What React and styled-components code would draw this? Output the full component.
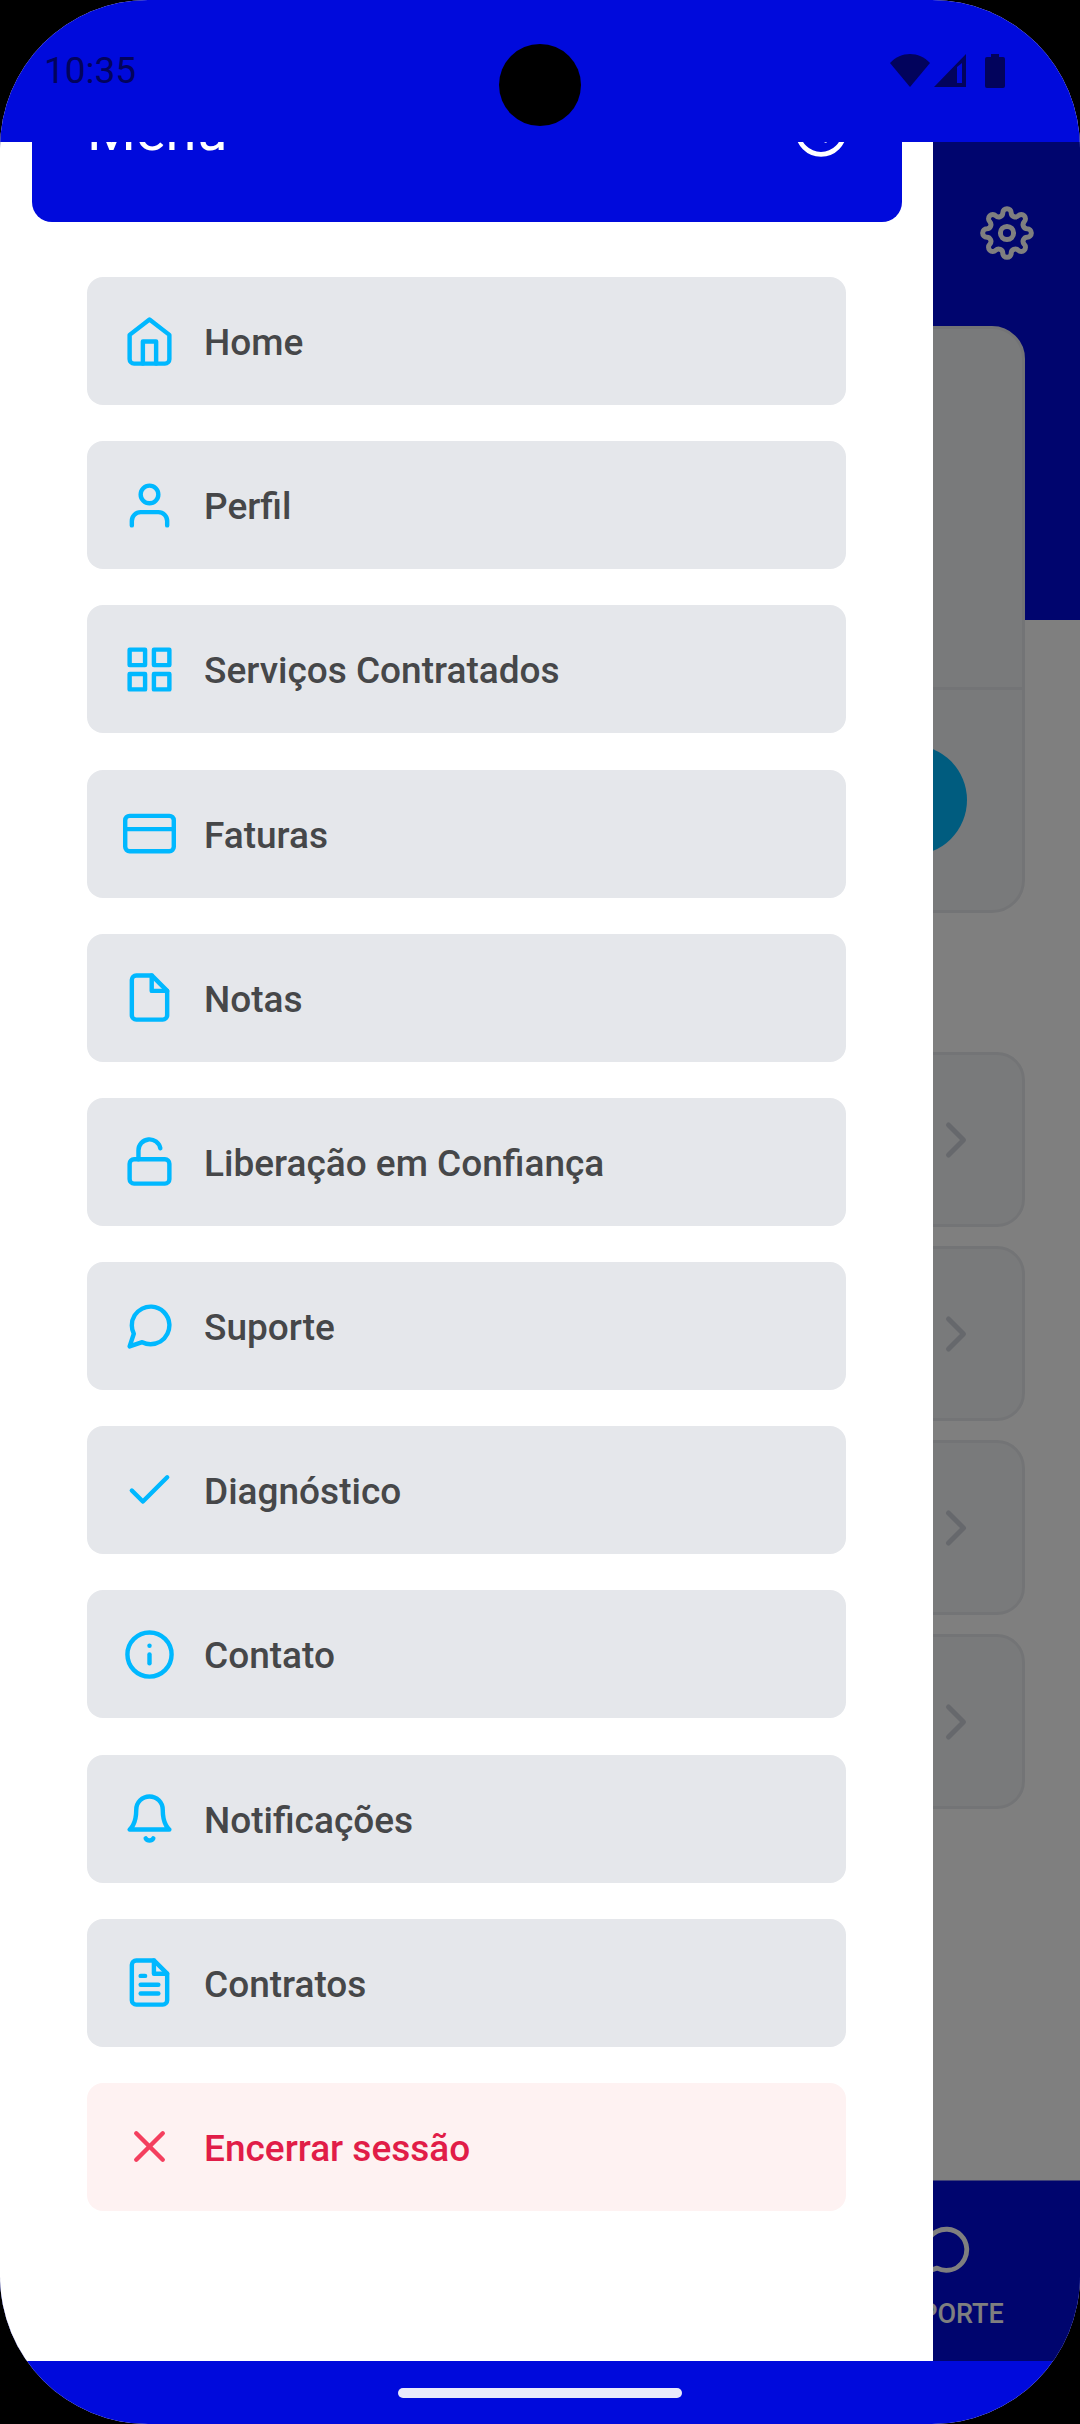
import styled, { createGlobalStyle } from "styled-components";
import {
  FiBell,
  FiCheck,
  FiChevronRight,
  FiCreditCard,
  FiFile,
  FiFileText,
  FiGrid,
  FiHome,
  FiInfo,
  FiMessageCircle,
  FiUnlock,
  FiUser,
  FiX,
} from "react-icons/fi";
import { CircleChevronLeft } from "lucide-react";

const colors = {
  primary: "#000adc",
  accent: "#00b8ff",
  status: "#02035c",
  surface: "#f3f4f6",
  border: "#e7e9ec",
  item: "#e5e7eb",
  text: "#464749",
  danger: "#e11d48",
  dangerIcon: "#f43f5e",
  dangerBg: "#fef2f2",
};

const GlobalStyle = createGlobalStyle`
  * {
    box-sizing: border-box;
  }
  body {
    margin: 0;
    background: #000;
    font-family: Roboto, "Noto Sans", sans-serif;
  }
  button {
    border: none;
    padding: 0;
    background: none;
    font: inherit;
    cursor: pointer;
  }
`;

const Screen = styled.div`
  display: flex;
  flex-direction: column;
  height: 100vh;
  overflow: hidden;
  border-radius: 148px;
  background: #fff;
`;

const StatusBar = styled.header`
  position: relative;
  display: flex;
  flex: none;
  align-items: center;
  justify-content: space-between;
  height: 142px;
  padding: 0 75px 0 44px;
  background: ${colors.primary};
  color: ${colors.status};
`;

const Clock = styled.time`
  font-size: 37px;
  line-height: 44px;
`;

const Camera = styled.span`
  position: absolute;
  top: 44px;
  left: 50%;
  width: 82px;
  height: 82px;
  margin-left: -41px;
  border-radius: 50%;
  background: #000;
`;

const StatusIcons = styled.svg`
  display: block;
  width: 115px;
  height: 34px;
  fill: currentColor;
`;

const Body = styled.div`
  position: relative;
  flex: 1;
  min-height: 0;
  overflow: hidden;
`;

const Page = styled.main`
  display: flex;
  flex-direction: column;
  height: 100%;
`;

const Hero = styled.div`
  flex: none;
  height: 478px;
  padding: 64px 46px;
  background: ${colors.primary};
  text-align: right;
`;

const SettingsButton = styled.button`
  color: #fff;
  svg {
    display: block;
    width: 54px;
    height: 54px;
  }
`;

const Content = styled.div`
  flex: 1;
  display: flex;
  flex-direction: column;
  margin-top: -294px;
  padding: 0 55px;
`;

const Card = styled.section`
  border: 3px solid ${colors.border};
  border-radius: 33px;
  overflow: hidden;
  background: ${colors.surface};
`;

const CardTop = styled.div`
  height: 358px;
`;

const CardBottom = styled.div`
  display: flex;
  justify-content: flex-end;
  padding: 55px;
  border-top: 3px solid ${colors.border};
`;

const RoundButton = styled.button`
  width: 110px;
  height: 110px;
  border-radius: 50%;
  background: ${colors.accent};
`;

const Shortcuts = styled.div`
  display: flex;
  flex-direction: column;
  gap: 19px;
  margin-top: 139px;
`;

const Shortcut = styled.button`
  display: flex;
  align-items: center;
  justify-content: flex-end;
  height: 175px;
  padding: 0 36px;
  border: 3px solid ${colors.border};
  border-radius: 28px;
  background: ${colors.surface};
  color: #cdd1d9;
  svg {
    width: 60px;
    height: 60px;
  }
`;

const TabBar = styled.nav`
  display: grid;
  grid-template-columns: repeat(4, 1fr);
  flex: none;
  height: 181px;
  padding-top: 9px;
  border-top: 1px solid #7f84ee;
  background: ${colors.primary};
`;

const Tab = styled.button`
  grid-column: ${({ $column }) => $column};
  display: flex;
  flex-direction: column;
  align-items: center;
  justify-content: center;
  gap: 18px;
  color: #fff;
  font-size: 27px;
  font-weight: 500;
  line-height: 32px;
  svg {
    width: 58px;
    height: 58px;
  }
`;

const Scrim = styled.div`
  position: absolute;
  inset: 0;
  background: rgba(0, 0, 0, 0.5);
`;

const Drawer = styled.aside`
  position: absolute;
  top: 0;
  bottom: 0;
  left: 0;
  display: flex;
  flex-direction: column;
  width: 933px;
  max-width: 87%;
  padding: 0 31px 0 32px;
  overflow: hidden;
  background: #fff;
`;

/* scrolled partly under the status bar */
const DrawerHeader = styled.div`
  display: flex;
  flex: none;
  align-items: center;
  justify-content: space-between;
  height: 182px;
  margin-top: -102px;
  padding: 0 53px 0 55px;
  border-radius: 20px;
  background: ${colors.primary};
  color: #fff;
`;

const Title = styled.h1`
  margin: 0;
  font-size: 56px;
  font-weight: 400;
  line-height: 64px;
`;

const CloseButton = styled.button`
  color: #fff;
  svg {
    display: block;
    width: 56px;
    height: 56px;
  }
`;

const Menu = styled.nav`
  display: flex;
  flex: 1;
  flex-direction: column;
  justify-content: space-between;
  padding: 55px 56px 150px 55px;
`;

const MenuItem = styled.button`
  display: flex;
  align-items: center;
  gap: 28px;
  height: 128px;
  padding: 0 36px;
  border-radius: 16px;
  background: ${({ $danger }) => ($danger ? colors.dangerBg : colors.item)};
  color: ${({ $danger }) => ($danger ? colors.danger : colors.text)};
  font-size: 37px;
  font-weight: 500;
  line-height: 44px;
  svg {
    flex: none;
    width: 53px;
    height: 53px;
    color: ${({ $danger }) => ($danger ? colors.dangerIcon : colors.accent)};
  }
`;

const Label = styled.span`
  padding-top: 4px;
`;

const GestureBar = styled.footer`
  display: flex;
  flex: none;
  align-items: center;
  justify-content: center;
  height: 63px;
  background: ${colors.primary};
`;

const GesturePill = styled.span`
  width: 284px;
  height: 10px;
  border-radius: 5px;
  background: #e9eafb;
`;

const menuItems = [
  { name: "Home", icon: FiHome },
  { name: "Perfil", icon: FiUser },
  { name: "Serviços Contratados", icon: FiGrid },
  { name: "Faturas", icon: FiCreditCard },
  { name: "Notas", icon: FiFile },
  { name: "Liberação em Confiança", icon: FiUnlock },
  { name: "Suporte", icon: FiMessageCircle },
  { name: "Diagnóstico", icon: FiCheck },
  { name: "Contato", icon: FiInfo },
  { name: "Notificações", icon: FiBell },
  { name: "Contratos", icon: FiFileText },
  { name: "Encerrar sessão", icon: FiX, danger: true },
];

// eight round teeth joined by arcs of the same radius
const gearPoint = (tooth, side) => {
  const a = (tooth * Math.PI) / 4;
  const x = 20.15 * Math.cos(a) - side * 4.2 * Math.sin(a);
  const y = 20.15 * Math.sin(a) + side * 4.2 * Math.cos(a);
  return `${x.toFixed(2)} ${y.toFixed(2)}`;
};
const gearPath =
  `M${gearPoint(0, -1)}` +
  [0, 1, 2, 3, 4, 5, 6, 7]
    .map(
      (t) =>
        `A4.2 4.2 0 0 1 ${gearPoint(t, 1)}A4.2 4.2 0 0 0 ${gearPoint(t + 1, -1)}`
    )
    .join("") +
  "Z";

const GearIcon = () => (
  <svg
    viewBox="-27 -27 54 54"
    fill="none"
    stroke="currentColor"
    strokeWidth="5"
  >
    <path d={gearPath} />
    <circle r="6.6" />
  </svg>
);

const App = () => {
  return (
    <>
      <GlobalStyle />
      <Screen>
        <StatusBar>
          <Clock>10:35</Clock>
          <Camera />
          <StatusIcons viewBox="0 0 115 34">
            {/* wifi */}
            <path d="M0 9C11 -3 29 -3 40 9L20 33Z" />
            {/* signal */}
            <path
              fillRule="evenodd"
              d="M44 33L76 0V33ZM67 13V29H72V9Z"
            />
            {/* battery */}
            <path d="M101 0h8v3h4q2 0 2 2v27q0 2 -2 2h-16q-2 0 -2 -2v-27q0 -2 2 -2h4z" />
          </StatusIcons>
        </StatusBar>

        <Body>
          <Page>
            <Hero>
              <SettingsButton aria-label="Configurações">
                <GearIcon />
              </SettingsButton>
            </Hero>
            <Content>
              <Card>
                <CardTop />
                <CardBottom>
                  <RoundButton />
                </CardBottom>
              </Card>
              <Shortcuts>
                {[1, 2, 3, 4].map((id) => (
                  <Shortcut key={id}>
                    <FiChevronRight />
                  </Shortcut>
                ))}
              </Shortcuts>
            </Content>
            <TabBar>
              <Tab $column={4}>
                <FiMessageCircle />
                SUPORTE
              </Tab>
            </TabBar>
          </Page>
          <Scrim />
          <Drawer>
            <DrawerHeader>
              <Title>Menu</Title>
              <CloseButton aria-label="Fechar">
                <CircleChevronLeft />
              </CloseButton>
            </DrawerHeader>
            <Menu>
              {menuItems.map(({ name, icon: Icon, danger }) => (
                <MenuItem key={name} $danger={danger}>
                  <Icon />
                  <Label>{name}</Label>
                </MenuItem>
              ))}
            </Menu>
          </Drawer>
        </Body>

        <GestureBar>
          <GesturePill />
        </GestureBar>
      </Screen>
    </>
  );
};

export default App;
